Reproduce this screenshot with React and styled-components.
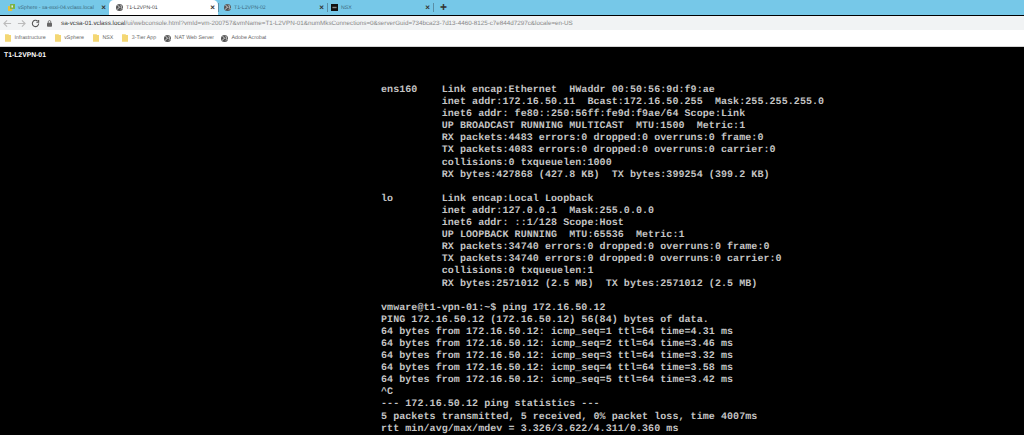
import React from "react";
import styled, { createGlobalStyle } from "styled-components";

const Global = createGlobalStyle`
  html, body { margin: 0; padding: 0; background: #000; }
  body { width: 1024px; height: 435px; overflow: hidden; font-family: "Liberation Sans", Arial, sans-serif; text-rendering: geometricPrecision; }
`;
const Page = styled.div`
  width: 1024px; height: 435px; display: flex; flex-direction: column; overflow: hidden; background: #000;
`;
const TabStrip = styled.div`
  height: 15px; background: #76c8e8; display: flex; align-items: stretch; flex: none;
`;
const Tab = styled.div`
  width: ${p => p.$w}px; flex: none; box-sizing: border-box; display: flex; align-items: center; gap: 3px;
  padding: 0 3px 0 ${p => p.$pad}px;
  background: ${p => (p.$active ? "#fff" : "transparent")};
  border-radius: ${p => (p.$active ? "5px 5px 0 0" : "0")};
  color: ${p => (p.$active ? "#444" : "#3d6b80")};
  font-size: 5.2px;
`;
const TabLabel = styled.span`
  flex: 1; min-width: 0; white-space: nowrap;
`;
const Close = styled.span`
  font-size: 8px; line-height: 1; color: #333; font-weight: bold;
`;
const Divider = styled.span`
  width: 1px; height: 9px; align-self: center; background: #5a8ea5; flex: none;
`;
const NewTab = styled.span`
  font-size: 12px; line-height: 14px; color: #333; margin-left: 6px; font-weight: bold;
`;
const AddressRow = styled.div`
  height: 14px; margin-top: 1px; background: #f1f3f4; flex: none; display: flex; align-items: center; padding-left: 3px; gap: 5px;
`;
const Nav = styled.svg`
  width: 9px; height: 9px; flex: none; fill: none; stroke: ${p => p.$c}; stroke-width: 1.2;
`;
const Lock = styled.svg`
  width: 5px; height: 7px; flex: none; margin-left: 2px;
`;
const Url = styled.div`
  font-size: 6.27px; color: #888; white-space: nowrap; margin-left: 4px;
  b { font-weight: normal; color: #333; }
`;
const Bookmarks = styled.div`
  height: 16px; background: #fff; border-bottom: 1px solid #d4d4d4; flex: none;
  display: flex; align-items: center; padding-left: 5px;
`;
const Mark = styled.div`
  display: flex; align-items: center; gap: 3.5px; font-size: 5.3px; color: #666; margin-right: ${p => p.$gap}px; white-space: nowrap;
`;
const Console = styled.main`
  flex: 1; min-height: 0; background: #000; overflow: hidden;
`;
const Title = styled.div`
  color: #fff; font-weight: bold; font-size: 6.8px; line-height: 10px; padding: 4px 0 0 4px;
`;
const Terminal = styled.pre`
  margin: 0; padding: 24px 0 0 381px;
  font-family: "Liberation Mono", "DejaVu Sans Mono", monospace;
  font-size: 10px; font-weight: bold; line-height: 12.1px; letter-spacing: .07px; color: #c4c4c4;
`;

const Glyph = styled.svg`
  flex: none;
`;
const Globe = () => (
  <Glyph width="7" height="7" viewBox="0 0 10 10">
    <circle cx="5" cy="5" r="5" fill="#555" />
    <path d="M2 2l2 1 1 2-2 1-1 2M6 1l2 2-1 2 2 1-2 2" stroke="#ddd" strokeWidth="1.2" fill="none" />
  </Glyph>
);
const VSphere = () => (
  <Glyph width="7" height="7" viewBox="0 0 10 10">
    <rect x="0" y="3" width="6" height="7" fill="#e6c23c" />
    <rect x="3" y="0" width="7" height="7" fill="#7cb342" />
    <rect x="5" y="2" width="2" height="3" fill="#eef" />
  </Glyph>
);
const NsxIcon = () => (
  <Glyph width="7" height="7" viewBox="0 0 10 10">
    <rect width="10" height="10" fill="#111" />
    <rect x="2" y="4" width="6" height="2" fill="#888" />
  </Glyph>
);
const Folder = () => (
  <Glyph width="6" height="8" viewBox="0 0 7 9">
    <path d="M0 0h4l1 1h2v8H0z" fill="#f4d774" />
  </Glyph>
);

const lines = `ens160    Link encap:Ethernet  HWaddr 00:50:56:9d:f9:ae
          inet addr:172.16.50.11  Bcast:172.16.50.255  Mask:255.255.255.0
          inet6 addr: fe80::250:56ff:fe9d:f9ae/64 Scope:Link
          UP BROADCAST RUNNING MULTICAST  MTU:1500  Metric:1
          RX packets:4483 errors:0 dropped:0 overruns:0 frame:0
          TX packets:4083 errors:0 dropped:0 overruns:0 carrier:0
          collisions:0 txqueuelen:1000
          RX bytes:427868 (427.8 KB)  TX bytes:399254 (399.2 KB)

lo        Link encap:Local Loopback
          inet addr:127.0.0.1  Mask:255.0.0.0
          inet6 addr: ::1/128 Scope:Host
          UP LOOPBACK RUNNING  MTU:65536  Metric:1
          RX packets:34740 errors:0 dropped:0 overruns:0 frame:0
          TX packets:34740 errors:0 dropped:0 overruns:0 carrier:0
          collisions:0 txqueuelen:1
          RX bytes:2571012 (2.5 MB)  TX bytes:2571012 (2.5 MB)

vmware@t1-vpn-01:~$ ping 172.16.50.12
PING 172.16.50.12 (172.16.50.12) 56(84) bytes of data.
64 bytes from 172.16.50.12: icmp_seq=1 ttl=64 time=4.31 ms
64 bytes from 172.16.50.12: icmp_seq=2 ttl=64 time=3.46 ms
64 bytes from 172.16.50.12: icmp_seq=3 ttl=64 time=3.32 ms
64 bytes from 172.16.50.12: icmp_seq=4 ttl=64 time=3.58 ms
64 bytes from 172.16.50.12: icmp_seq=5 ttl=64 time=3.42 ms
^C
--- 172.16.50.12 ping statistics ---
5 packets transmitted, 5 received, 0% packet loss, time 4007ms
rtt min/avg/max/mdev = 3.326/3.622/4.311/0.360 ms`;

const tabs = [
  { icon: <VSphere />, label: "vSphere - sa-esxi-04.vclass.local", w: 109, pad: 8 },
  { icon: <Globe />, label: "T1-L2VPN-01", active: true, w: 109, pad: 7 },
  { icon: <Globe />, label: "T1-L2VPN-02", w: 108, pad: 5 },
  { icon: <NsxIcon />, label: "NSX", w: 105, pad: 3 },
];
const marks = [
  { icon: <Folder />, label: "Infrastructure", gap: 9 },
  { icon: <Folder />, label: "vSphere", gap: 9 },
  { icon: <Folder />, label: "NSX", gap: 9 },
  { icon: <Folder />, label: "3-Tier App", gap: 8 },
  { icon: <Globe />, label: "NAT Web Server", gap: 7 },
  { icon: <Globe />, label: "Adobe Acrobat", gap: 0 },
];

export default function App() {
  return (
    <Page>
      <Global />
      <TabStrip>
        {tabs.map((t, i) => (
          <React.Fragment key={t.label}>
            {i >= 2 && <Divider />}
            <Tab $active={t.active} $w={t.w} $pad={t.pad}>
              {t.icon}
              <TabLabel>{t.label}</TabLabel>
              <Close>×</Close>
            </Tab>
          </React.Fragment>
        ))}
        <Divider />
        <NewTab>+</NewTab>
      </TabStrip>
      <AddressRow>
        <Nav viewBox="0 0 10 10" $c="#bbb"><path d="M9 5H1M4.5 1.5L1 5l3.5 3.5" /></Nav>
        <Nav viewBox="0 0 10 10" $c="#bbb"><path d="M1 5h8M5.5 1.5L9 5 5.5 8.5" /></Nav>
        <Nav viewBox="0 0 10 10" $c="#555"><path d="M8.5 5A3.5 3.5 0 1 1 7.4 2.4M8.5 1v2.6H6" /></Nav>
        <Lock viewBox="0 0 6 8">
          <rect y="3" width="6" height="5" rx="1" fill="#666" />
          <path d="M1.5 3.5V2a1.5 1.5 0 0 1 3 0v1.5" stroke="#666" fill="none" />
        </Lock>
        <Url><b>sa-vcsa-01.vclass.local</b>/ui/webconsole.html?vmId=vm-200757&amp;vmName=T1-L2VPN-01&amp;numMksConnections=0&amp;serverGuid=734bca23-7d13-4460-8125-c7e844d7297c&amp;locale=en-US</Url>
      </AddressRow>
      <Bookmarks>
        {marks.map(m => (
          <Mark key={m.label} $gap={m.gap}>{m.icon}{m.label}</Mark>
        ))}
      </Bookmarks>
      <Console>
        <Title>T1-L2VPN-01</Title>
        <Terminal>{lines}</Terminal>
      </Console>
    </Page>
  );
}
